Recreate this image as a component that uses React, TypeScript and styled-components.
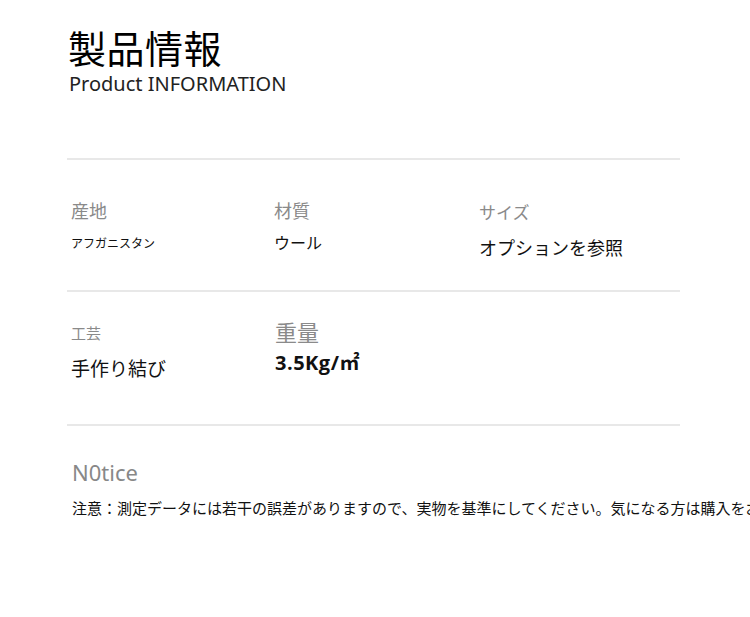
import React from "react";
import styled, { createGlobalStyle } from "styled-components";

const Global = createGlobalStyle`
  html, body { margin: 0; padding: 0; background: #ffffff; overflow: hidden; }
  body { font-family: "Noto Sans CJK JP", "Noto Sans", sans-serif; color: #111; }
`;

const Page = styled.div`
  width: 750px;
  height: 617px;
  padding: 24px 0 0 67px;
  box-sizing: border-box;
  overflow: hidden;
`;

const Header = styled.header`
  display: flex;
  flex-direction: column;
  padding-left: 1px;
  height: 134px;
`;

const Title = styled.h1`
  margin: 0;
  font-size: 38px;
  font-weight: 400;
  line-height: 46px;
  color: #000;
  letter-spacing: 0.5px;
`;

const Subtitle = styled.div`
  font-family: "Noto Sans", sans-serif;
  font-size: 20px;
  line-height: 24px;
  color: #222;
  padding: 2px 0 0 1px;
`;

const Divider = styled.hr`
  margin: 0;
  border: none;
  height: 2px;
  width: 613px;
  background: #e8e8e8;
`;

const Row = styled.section<{ $h: number; $pt: number }>`
  display: grid;
  grid-template-columns: 204px 205px 1fr;
  height: ${(p) => p.$h}px;
  padding-top: ${(p) => p.$pt}px;
  box-sizing: border-box;
`;

const Cell = styled.div<{ $dx: number; $dy?: number; $gap: number }>`
  display: flex;
  flex-direction: column;
  padding-left: ${(p) => p.$dx}px;
  padding-top: ${(p) => p.$dy ?? 0}px;
  gap: ${(p) => p.$gap}px;
`;

const Label = styled.div<{ $size: number }>`
  font-size: ${(p) => p.$size}px;
  line-height: 1.2;
  color: #8a8a8a;
`;

const Value = styled.div<{ $size: number; $bold?: boolean }>`
  font-size: ${(p) => p.$size}px;
  line-height: 1.2;
  color: #111;
  font-weight: ${(p) => (p.$bold ? 700 : 400)};
  font-family: ${(p) =>
    p.$bold ? `"Open Sans", "Noto Sans CJK JP", sans-serif` : "inherit"};
  letter-spacing: ${(p) => (p.$bold ? "0.5px" : "0")};
`;

const Notice = styled.section`
  display: flex;
  flex-direction: column;
  padding: 31px 0 0 5px;
  gap: 10px;
  overflow: hidden;
`;

const NoticeTitle = styled.div`
  font-family: "Noto Sans", sans-serif;
  font-size: 22px;
  line-height: 30px;
  color: #888;
  font-weight: 400;
`;

const NoticeText = styled.div`
  font-size: 15px;
  line-height: 22px;
  color: #111;
  white-space: nowrap;
`;

export default function App() {
  return (
    <>
      <Global />
      <Page>
        <Header>
          <Title>製品情報</Title>
          <Subtitle>Product INFORMATION</Subtitle>
        </Header>
        <Divider />
        <Row $h={130} $pt={40}>
          <Cell $dx={4} $gap={14}>
            <Label $size={18}>産地</Label>
            <Value $size={12}>アフガニスタン</Value>
          </Cell>
          <Cell $dx={3} $gap={11}>
            <Label $size={18}>材質</Label>
            <Value $size={16}>ウール</Value>
          </Cell>
          <Cell $dx={3} $dy={2} $gap={15}>
            <Label $size={17}>サイズ</Label>
            <Value $size={18}>オプションを参照</Value>
          </Cell>
        </Row>
        <Divider />
        <Row $h={132} $pt={26}>
          <Cell $dx={4} $dy={6} $gap={15}>
            <Label $size={15}>工芸</Label>
            <Value $size={19}>手作り結び</Value>
          </Cell>
          <Cell $dx={4} $gap={7}>
            <Label $size={22}>重量</Label>
            <Value $size={20} $bold>
              3.5Kg/㎡
            </Value>
          </Cell>
          <div />
        </Row>
        <Divider />
        <Notice>
          <NoticeTitle>N0tice</NoticeTitle>
          <NoticeText>
            注意：測定データには若干の誤差がありますので、実物を基準にしてください。気になる方は購入をお控えください。
          </NoticeText>
        </Notice>
      </Page>
    </>
  );
}
